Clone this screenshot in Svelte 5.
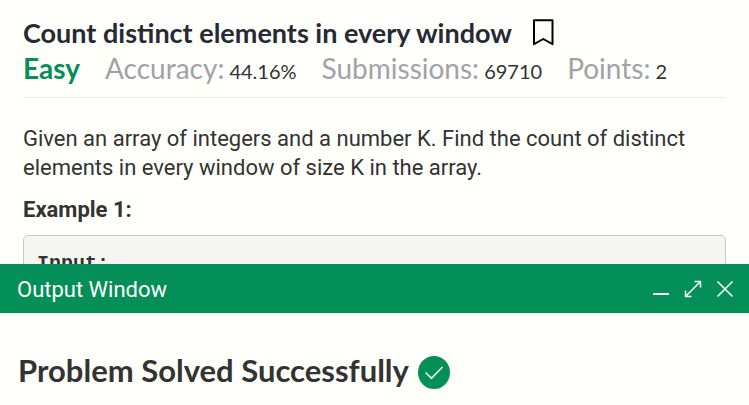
<script>
  const stats = [
    { label: 'Accuracy:', value: '44.16%' },
    { label: 'Submissions:', value: '69710' },
    { label: 'Points:', value: '2' }
  ];
</script>

<div class="page">
  <main class="problem">
    <header>
      <div class="title">
        <h1>Count distinct elements in every window</h1>
        <button class="bookmark" aria-label="Bookmark">
          <svg width="22" height="28" viewBox="0 0 22 28" fill="none" stroke="#000" stroke-width="2">
            <path d="M2 1.200h18.500v24l-9.250-5.200-9.250 5.200z" stroke-linejoin="round" />
          </svg>
        </button>
      </div>
      <div class="stats">
        <span class="level">Easy</span>
        {#each stats as stat}
          <span class="stat"><span class="label">{stat.label}</span><span class="value">{stat.value}</span></span>
        {/each}
      </div>
    </header>
    <p>Given an array of integers and a number K. Find the count of distinct elements in every window of size K in the array.</p>
    <h2>Example 1:</h2>
    <pre>Input:</pre>
  </main>

  <section class="output">
    <div class="bar">
      <span class="name">Output Window</span>
      <button aria-label="Minimize">
        <svg width="18" height="18" viewBox="0 0 18 18"><path d="M1 14h16" stroke-width="2" /></svg>
      </button>
      <button aria-label="Expand">
        <svg width="18" height="18" viewBox="0 0 18 18"><path d="M2 16 16 2M10.500 1.500h6v6M1.500 10.500v6h6" /></svg>
      </button>
      <button aria-label="Close">
        <svg width="18" height="18" viewBox="0 0 18 18"><path d="M1.500 1.500l15 15M16.500 1.500l-15 15" /></svg>
      </button>
    </div>
    <div class="result">
      <strong>Problem Solved Successfully</strong>
      <svg width="32" height="33" viewBox="0 0 32 33" fill="none" aria-hidden="true">
        <ellipse cx="16" cy="16.500" rx="16" ry="16.500" fill="#048f59" />
        <path d="M7.500 16.500l6 5.700L24.500 11" stroke="#d5f0e3" stroke-width="1.700" />
      </svg>
    </div>
  </section>
</div>

<style>
  :global(body) {
    margin: 0;
    background: #fffffc;
  }
  .page {
    display: flex;
    flex-direction: column;
    height: 100vh;
    background: #fffffc;
    color: #333331;
    font-family: Roboto, "Liberation Sans", sans-serif;
  }
  .problem {
    flex: 1;
    min-height: 0;
    overflow: hidden;
    padding: 15px 23px 0;
  }
  header {
    border-bottom: 1px solid #eaeae8;
    padding-bottom: 8px;
    font-family: Lato, "Liberation Sans", sans-serif;
  }
  .title {
    display: flex;
    align-items: center;
    gap: 20px;
    height: 35px;
  }
  h1 {
    margin: 0;
    font-size: 27px;
    line-height: 35px;
    font-weight: 700;
    color: #262a35;
    white-space: nowrap;
  }
  button {
    display: flex;
    padding: 0;
    border: 0;
    background: none;
    cursor: pointer;
  }
  .stats {
    display: flex;
    gap: 25px;
    line-height: 36px;
    white-space: nowrap;
  }
  .level {
    font-size: 28px;
    font-weight: 700;
    color: #048f59;
  }
  .stat {
    display: flex;
    align-items: baseline;
    gap: 5px;
  }
  .label {
    font-size: 28px;
    color: #a2a2a6;
  }
  .value {
    font-size: 20px;
  }
  p {
    margin: 26px 0 13px;
    font-size: 22px;
    line-height: 29px;
  }
  h2 {
    margin: 0;
    font-size: 22px;
    line-height: 30px;
    font-weight: 700;
  }
  pre {
    margin: 10px 0 0;
    padding: 14px 13px;
    min-height: 60px;
    border: 1px solid #c8cac6;
    border-radius: 5px;
    background: #f5f5f2;
    font: 700 20px/28px "Liberation Mono", monospace;
  }
  .bar {
    display: flex;
    align-items: center;
    gap: 14px;
    height: 49px;
    padding: 0 15px 0 17px;
    background: #048f59;
    color: #fffffc;
  }
  .name {
    flex: 1;
    font-size: 22px;
    line-height: 50px;
    padding-top: 2px;
  }
  .bar svg {
    fill: none;
    stroke: #fffffc;
    stroke-width: 1.500;
  }
  .result {
    display: flex;
    align-items: center;
    gap: 9px;
    padding: 41px 18px 15px;
    font-family: Lato, "Liberation Sans", sans-serif;
  }
  strong {
    font-size: 31px;
    line-height: 32px;
    padding-bottom: 4px;
    font-weight: 700;
    white-space: nowrap;
  }
</style>
